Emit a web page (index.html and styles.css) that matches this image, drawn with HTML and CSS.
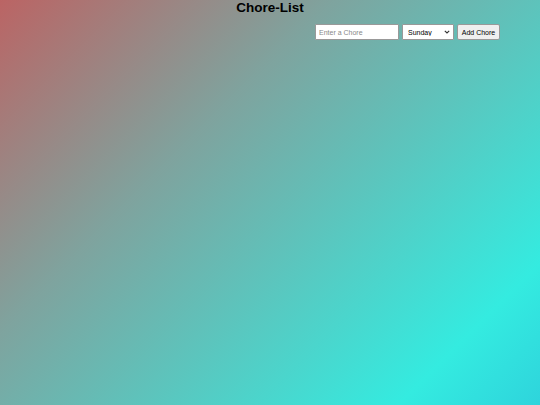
FILE: index.html
```html
<!DOCTYPE html>
<html lang="en">
<head>
<meta charset="utf-8">
<title>Chore-List</title>
<link rel="stylesheet" href="styles.css">
</head>
<body>
<h1 class="title">Chore-List</h1>
<form class="chore-form">
  <input class="chore-input" type="text" placeholder="Enter a Chore">
  <span class="select-wrap">
    <select class="day-select">
      <option>Sunday</option>
      <option>Monday</option>
      <option>Tuesday</option>
      <option>Wednesday</option>
      <option>Thursday</option>
      <option>Friday</option>
      <option>Saturday</option>
    </select>
    <svg class="chevron" width="6" height="4" viewBox="0 0 6 4" aria-hidden="true"><path d="M0.8 0.8 L3 3 L5.2 0.8" fill="none" stroke="#333" stroke-width="1.1"/></svg>
  </span>
  <button class="add-btn" type="button">Add Chore</button>
</form>
</body>
</html>
```
FILE: styles.css
```css
html, body {
  margin: 0;
  height: 100%;
}
body {
  font-family: "Liberation Sans", Arial, sans-serif;
  background: linear-gradient(135deg, #bb6464 0%, #7fa39e 35%, #34ebe0 85%, #2ed4dc 100%);
  overflow: hidden;
}
.title {
  margin: 0;
  font-size: 13.5px;
  line-height: 16px;
  font-weight: bold;
  text-align: center;
  color: #000;
}
.chore-form {
  display: flex;
  align-items: flex-start;
  justify-content: flex-end;
  gap: 3px;
  padding-right: 40px;
  margin-top: 8px;
}
.chore-input {
  box-sizing: border-box;
  width: 84px;
  height: 16px;
  padding: 0 3px;
  border: 1px solid #999;
  border-radius: 1px;
  font-family: inherit;
  font-size: 7px;
  background: #fff;
}
.chore-input::placeholder {
  color: #888;
}
.select-wrap {
  position: relative;
  display: block;
  width: 52px;
  height: 16px;
}
.day-select {
  display: block;
  box-sizing: border-box;
  -webkit-appearance: none;
  appearance: none;
  width: 52px;
  height: 16px;
  padding: 0 0 0 5px;
  border: 1px solid #999;
  border-radius: 1px;
  font-family: inherit;
  font-size: 7px;
  color: #000;
  background: #fff;
}
.chevron {
  position: absolute;
  right: 4px;
  top: 6px;
  pointer-events: none;
}
.add-btn {
  box-sizing: border-box;
  width: 43px;
  height: 16px;
  padding: 0;
  border: 1px solid #999;
  border-radius: 2px;
  background: #efefef;
  font-family: inherit;
  font-size: 7px;
  color: #000;
}
```
